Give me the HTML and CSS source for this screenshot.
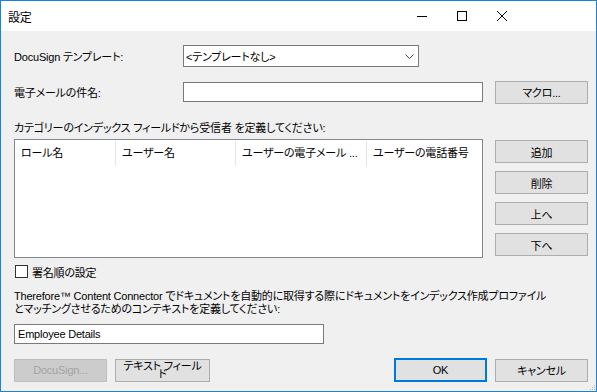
FILE: index.html
```html
<!DOCTYPE html>
<html lang="ja">
  <head>
    <meta charset="utf-8" />
    <title>設定</title>
    <link rel="stylesheet" href="styles.css">
  </head>
  <body>
    <div class="window">
      <div class="titlebar">
        <span class="title">設定</span>
        <div class="caption-btns">
          <span class="caption-btn">
            <svg width="10" height="10" viewBox="0 0 10 10"><path d="M0 5.5h10" stroke="#000" stroke-width="1"/></svg>
          </span>
          <span class="caption-btn">
            <svg width="10" height="10" viewBox="0 0 10 10"><rect x="0.5" y="0.5" width="9" height="9" fill="none" stroke="#000" stroke-width="1"/></svg>
          </span>
          <span class="caption-btn">
            <svg width="10" height="10" viewBox="0 0 10 10"><path d="M0 0L10 10M10 0L0 10" stroke="#000" stroke-width="1"/></svg>
          </span>
        </div>
      </div>

      <div class="content">
        <div class="row row-template">
          <span class="field-label">DocuSign テンプレート:</span>
          <div class="combo">
            <span>&lt;テンプレートなし&gt;</span>
            <svg width="9" height="5" viewBox="0 0 9 5"><path d="M0.5 0.5L4.5 4.5L8.5 0.5" fill="none" stroke="#444" stroke-width="1"/></svg>
          </div>
        </div>

        <div class="row row-subject">
          <span class="field-label">電子メールの件名:</span>
          <div class="textbox subject"></div>
          <button class="btn">マクロ...</button>
        </div>

        <p class="section-label">カテゴリーのインデックス フィールドから受信者 を定義してください:</p>

        <div class="recipients">
          <div class="listview">
            <div class="list-header">
              <span class="col col-role">ロール名</span>
              <span class="col col-user">ユーザー名</span>
              <span class="col col-mail">ユーザーの電子メール ...</span>
              <span class="col col-phone">ユーザーの電話番号</span>
            </div>
          </div>
          <div class="side-buttons">
            <button class="btn">追加</button>
            <button class="btn">削除</button>
            <button class="btn">上へ</button>
            <button class="btn">下へ</button>
          </div>
        </div>

        <label class="check-row">
          <span class="checkbox"></span>
          署名順の設定
        </label>

        <p class="context-text">Therefore™ Content Connector でドキュメントを自動的に取得する際にドキュメントをインデックス作成プロファイル<br>とマッチングさせるためのコンテキストを定義してください:</p>

        <div class="textbox context">Employee Details</div>

        <div class="footer">
          <button class="btn" disabled>DocuSign...</button>
          <button class="btn btn-field"><span class="btn-label">テキスト フィールド</span></button>
          <span class="spacer"></span>
          <button class="btn btn-ok">OK</button>
          <button class="btn">キャンセル</button>
        </div>
      </div>

      <svg class="grip" width="7" height="7" viewBox="0 0 7 7">
        <rect x="5" y="1" width="1" height="1" fill="#b0b0b0"/>
        <rect x="3" y="3" width="1" height="1" fill="#b0b0b0"/>
        <rect x="5" y="3" width="1" height="1" fill="#b0b0b0"/>
        <rect x="1" y="5" width="1" height="1" fill="#b0b0b0"/>
        <rect x="3" y="5" width="1" height="1" fill="#b0b0b0"/>
        <rect x="5" y="5" width="1" height="1" fill="#b0b0b0"/>
      </svg>
    </div>
  </body>
</html>
```

FILE: styles.css
```css
body {
  margin: 0;
  font-family: "Liberation Sans", "Noto Sans CJK JP", sans-serif;
  font-size: 11px;
  letter-spacing: -0.2px;
  font-feature-settings: "palt";
  color: #000;
}

.window {
  position: relative;
  width: 597px;
  height: 392px;
  box-sizing: border-box;
  border: 1px solid #1883d7;
  background: #f0f0f0;
}

.titlebar {
  height: 30px;
  background: #fff;
  display: flex;
  align-items: center;
  padding-left: 7px;
  font-size: 12px;
}

.title {
  flex: 1;
}

.caption-btns {
  display: flex;
  margin-right: 74px;
}

.caption-btn {
  width: 40px;
  height: 30px;
  display: flex;
  align-items: center;
  justify-content: center;
}

.content {
  padding: 14px 8px 0 13px;
}

.row {
  display: flex;
  align-items: center;
  height: 22px;
}

.row-subject {
  margin-top: 14px;
}

.field-label {
  width: 169px;
}

.combo {
  width: 236px;
  height: 22px;
  box-sizing: border-box;
  border: 1px solid #7a7a7a;
  background: #fff;
  display: flex;
  align-items: center;
  justify-content: space-between;
  padding: 0 4px 0 2px;
}

.textbox {
  height: 20px;
  box-sizing: border-box;
  border: 1px solid #7a7a7a;
  background: #fff;
  padding: 0 3px;
  line-height: 18px;
}

.subject {
  width: 300px;
  margin-right: 12px;
}

.context {
  width: 310px;
  margin-top: 8px;
}

.btn {
  width: 93px;
  height: 23px;
  box-sizing: border-box;
  border: 1px solid #adadad;
  background: #e1e1e1;
  font: inherit;
  letter-spacing: inherit;
  color: #000;
  padding: 0;
}

.btn:disabled {
  background: #cccccc;
  border-color: #bfbfbf;
  color: #a3a3a3;
}

.section-label {
  margin: 19px 0 4px;
  line-height: 13px;
}

.recipients {
  display: flex;
  gap: 12px;
  height: 119px;
}

.listview {
  width: 469px;
  box-sizing: border-box;
  border: 1px solid #828790;
  background: #fff;
}

.list-header {
  display: flex;
  height: 26px;
}

.col {
  box-sizing: border-box;
  padding-left: 6px;
  line-height: 24px;
  white-space: nowrap;
  overflow: hidden;
  border-right: 1px solid #e5e5e5;
  margin-top: 1px;
}

.col-role {
  width: 101px;
}

.col-user {
  width: 120px;
}

.col-mail {
  width: 131px;
}

.col-phone {
  flex: 1;
  border-right: none;
}

.side-buttons {
  display: flex;
  flex-direction: column;
  gap: 8px;
  padding-top: 1px;
}

.check-row {
  display: flex;
  align-items: center;
  gap: 4px;
  margin-top: 7px;
  margin-left: 1px;
  height: 13px;
}

.checkbox {
  width: 13px;
  height: 13px;
  box-sizing: border-box;
  border: 1px solid #333;
  background: #fff;
}

.context-text {
  margin: 12px 0 0;
  line-height: 13px;
}

.footer {
  display: flex;
  align-items: center;
  height: 24px;
  margin-top: 14px;
}

.btn-field {
  width: 95px;
  margin-left: 8px;
  padding: 0 4px;
  overflow: hidden;
}

.btn-label {
  display: block;
  line-height: 8px;
  height: 17px;
  overflow: hidden;
  padding-top: 1px;
}

.spacer {
  flex: 1;
}

.btn-ok {
  height: 24px;
  border: 2px solid #0078d7;
  margin-right: 8px;
}

.grip {
  position: absolute;
  right: 0;
  bottom: 0;
}
```
